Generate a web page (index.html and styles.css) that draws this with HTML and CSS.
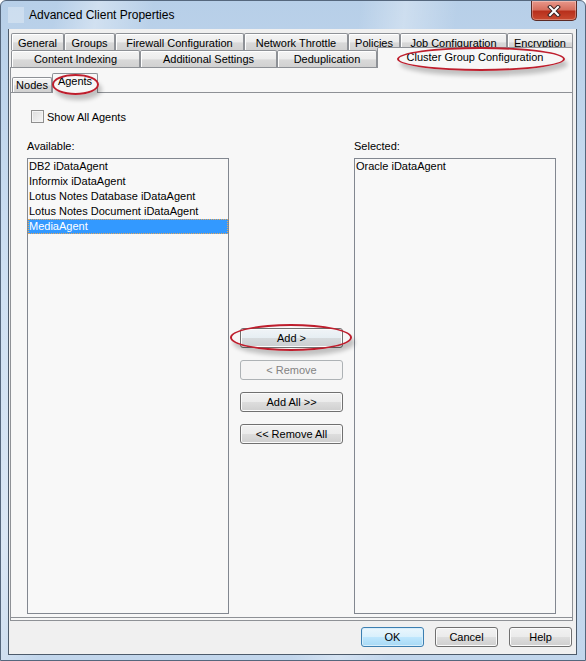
FILE: index.html
```html
<!DOCTYPE html>
<html lang="en">
<head>
    <title>Advanced Client Properties</title>
    <link rel="stylesheet" href="styles.css">
</head>
<body>
    <div class="window">
        <div class="titlebar">
            <span class="app-icon"></span>
            <span class="title">Advanced Client Properties</span>
            <span class="close-btn">
                <svg width="14" height="12" viewBox="0 0 14 12">
                    <path d="M3 2 L11 10 M11 2 L3 10" stroke="#3a2424" stroke-width="4" stroke-linecap="square"/>
                    <path d="M3 2 L11 10 M11 2 L3 10" stroke="#ffffff" stroke-width="2" stroke-linecap="square"/>
                </svg>
            </span>
        </div>

        <div class="client">
            <div class="tabs">
                <div class="tab-row row-top">
                    <span class="tab">General</span>
                    <span class="tab">Groups</span>
                    <span class="tab">Firewall Configuration</span>
                    <span class="tab">Network Throttle</span>
                    <span class="tab">Policies</span>
                    <span class="tab">Job Configuration</span>
                    <span class="tab">Encryption</span>
                </div>
                <div class="tab-row row-bottom">
                    <span class="tab">Content Indexing</span>
                    <span class="tab">Additional Settings</span>
                    <span class="tab">Deduplication</span>
                    <span class="tab active">Cluster Group Configuration</span>
                </div>
            </div>

            <div class="panel">
                <div class="subtabs">
                    <span class="subtab">Nodes</span>
                    <span class="subtab active">Agents</span>
                </div>
                <div class="subpanel">
                    <label class="check-row">
                        <span class="checkbox"></span>
                        Show All Agents
                    </label>

                    <div class="columns">
                        <div class="col">
                            <div class="col-label">Available:</div>
                            <ul class="list">
                                <li>DB2 iDataAgent</li>
                                <li>Informix iDataAgent</li>
                                <li>Lotus Notes Database iDataAgent</li>
                                <li>Lotus Notes Document iDataAgent</li>
                                <li class="selected">MediaAgent</li>
                            </ul>
                        </div>

                        <div class="mover">
                            <button class="btn hot">Add &gt;</button>
                            <button class="btn" disabled>&lt; Remove</button>
                            <button class="btn">Add All &gt;&gt;</button>
                            <button class="btn">&lt;&lt; Remove All</button>
                        </div>

                        <div class="col">
                            <div class="col-label">Selected:</div>
                            <ul class="list">
                                <li>Oracle iDataAgent</li>
                            </ul>
                        </div>
                    </div>
                </div>
            </div>

            <div class="footer">
                <button class="btn wide default">OK</button>
                <button class="btn wide">Cancel</button>
                <button class="btn wide">Help</button>
            </div>
        </div>

        <!-- red callouts drawn over the dialog -->
        <span class="mark mark-cluster"></span>
        <span class="mark mark-agents"></span>
        <span class="mark mark-add"></span>
    </div>
</body>
</html>
```

FILE: styles.css
```css
* {
    margin: 0;
    padding: 0;
    box-sizing: border-box;
}

body {
    font-family: "Liberation Sans", Arial, sans-serif;
    font-size: 11px;
    color: #000;
    background: #fff;
}

.window {
    position: relative;
    width: 586px;
    height: 661px;
    display: flex;
    flex-direction: column;
    padding: 0 8px 5px 7px;
    border: 1px solid #55677d;
    border-radius: 6px 6px 0 0;
    overflow: hidden;
    background:
        linear-gradient(100deg, transparent 8%, rgba(255,255,255,0.35) 14%, transparent 22%),
        linear-gradient(96deg, transparent 55%, rgba(255,255,255,0.3) 62%, transparent 70%),
        linear-gradient(180deg, #b7cfe8 0%, #d0e1f3 45%, #c2d6ec 100%);
}

/* title bar */
.titlebar {
    height: 28px;
    display: flex;
    align-items: center;
}

.app-icon {
    width: 16px;
    height: 16px;
    margin-top: -1px;
    background: rgba(255,255,255,0.3);
}

.title {
    margin-left: 5px;
    font-size: 12px;
    color: #000;
}

.close-btn {
    align-self: flex-start;
    margin-left: auto;
    width: 46px;
    height: 20px;
    display: flex;
    align-items: center;
    justify-content: center;
    border: 1px solid #5b2a24;
    border-top: none;
    border-radius: 0 0 5px 5px;
    background: linear-gradient(180deg, #e8978a 0%, #d6705f 45%, #b8301c 55%, #c94a30 100%);
    box-shadow: inset 0 0 0 1px rgba(255,255,255,0.3);
}

/* client area */
.client {
    flex: 1;
    display: flex;
    flex-direction: column;
    padding: 4px 3px 0 1px;
    background: #f0f0f0;
    border: 1px solid #4d5b6b;
    border-top: none;
}

.tabs {
    margin-left: 1px;
}

.tab-row {
    display: grid;
    height: 17px;
}

.row-top {
    grid-template-columns: 53px 51px 129px 104px 52px 107px 66px;
}

.row-bottom {
    grid-template-columns: 129px 137px 100px 196px;
    align-items: end;
}

.tab {
    height: 17px;
    padding-top: 2px;
    line-height: 14px;
    text-align: center;
    white-space: nowrap;
    border: 1px solid #8e9196;
    border-bottom: none;
    border-radius: 2px 2px 0 0;
    box-shadow: inset 1px 1px 0 #ffffff;
    background: linear-gradient(180deg, #f4f4f4 0%, #ececec 50%, #d9d9d9 55%, #d1d1d1 100%);
}

.row-bottom .tab {
    padding-top: 1px;
}

.tab.active {
    position: relative;
    z-index: 1;
    height: 21px;
    margin-top: -3px;
    margin-bottom: -1px;
    padding-top: 2px;
    background: #f7f7f7;
    box-shadow: none;
}

.panel {
    flex: 1;
    display: flex;
    flex-direction: column;
    padding-bottom: 2px;
    background: #f7f7f7;
    border: 1px solid #8e9196;
}

.subtabs {
    display: flex;
    align-items: flex-end;
    height: 24px;
    padding-left: 1px;
}

.subtab {
    width: 40px;
    height: 15px;
    padding-top: 1px;
    line-height: 13px;
    text-align: center;
    border: 1px solid #8e9196;
    border-bottom: none;
    border-radius: 2px 2px 0 0;
    box-shadow: inset 1px 1px 0 #ffffff;
    background: linear-gradient(180deg, #f4f4f4 0%, #ececec 50%, #d9d9d9 55%, #d1d1d1 100%);
}

.subtab.active {
    position: relative;
    z-index: 1;
    width: 46px;
    height: 20px;
    margin-bottom: -1px;
    background: #f7f7f7;
    box-shadow: none;
}

.subpanel {
    flex: 1;
    padding: 17px 0 0 20px;
    border-top: 1px solid #8e9196;
    border-bottom: 1px solid #8e9196;
}

.check-row {
    display: flex;
    align-items: center;
    gap: 3px;
    height: 13px;
}

.checkbox {
    width: 13px;
    height: 13px;
    border: 1px solid #8f8f8f;
    background: linear-gradient(135deg, #dcdcdc, #f6f6f6);
    box-shadow: inset 0 0 0 1px #f4f4f4;
}

.columns {
    display: flex;
    gap: 11px;
    margin: 17px 0 0 -4px;
}

.col-label {
    height: 13px;
    line-height: 13px;
    margin-bottom: 5px;
}

.list {
    list-style: none;
    width: 202px;
    height: 456px;
    padding: 0;
    background: #f8f8f8;
    border: 1px solid #828790;
}

.list li {
    height: 15px;
    line-height: 15px;
    padding-left: 1px;
    white-space: nowrap;
}

.list li.selected {
    background: #3399ff;
    color: #fff;
    outline: 1px dotted #e8a85a;
    outline-offset: -1px;
}

.mover {
    display: flex;
    flex-direction: column;
    justify-content: center;
    gap: 12px;
    width: 103px;
    height: 456px;
    margin-top: 18px;
}

.btn {
    height: 20px;
    font-family: "Liberation Sans", Arial, sans-serif;
    font-size: 11px;
    color: #000;
    border: 1px solid #707070;
    border-radius: 3px;
    box-shadow: inset 0 0 0 1px #fbfbfb;
    background: linear-gradient(180deg, #f2f2f2 0%, #ebebeb 50%, #dddddd 52%, #cfcfcf 100%);
}

.btn.hot {
    background: linear-gradient(180deg, #f0f4f7 0%, #e6eef3 50%, #d6dbde 52%, #cbced0 100%);
}

.btn:disabled {
    color: #838383;
    border-color: #adb2b5;
    background: #f4f4f4;
    box-shadow: none;
}

.footer {
    height: 33px;
    display: flex;
    justify-content: flex-end;
    align-items: flex-start;
    gap: 11px;
    padding: 6px 1px 0 0;
}

.btn.wide {
    width: 63px;
}

.btn.default {
    border-color: #3c7fb1;
    box-shadow: inset 0 0 0 1px #d8eefb;
    background: linear-gradient(180deg, #eaf6fd 0%, #d9f0fc 50%, #bee6fd 52%, #a7d9f5 100%);
}

/* annotation ellipses */
.mark {
    position: absolute;
    z-index: 2;
    border: 2px solid #be1e2d;
    border-radius: 50%;
    box-shadow: 3px 5px 4px rgba(0,0,0,0.22);
}

.mark-cluster {
    left: 396px;
    top: 46px;
    width: 168px;
    height: 24px;
}

.mark-agents {
    left: 51px;
    top: 73px;
    width: 47px;
    height: 21px;
}

.mark-add {
    left: 229px;
    top: 323px;
    width: 122px;
    height: 27px;
}
```
